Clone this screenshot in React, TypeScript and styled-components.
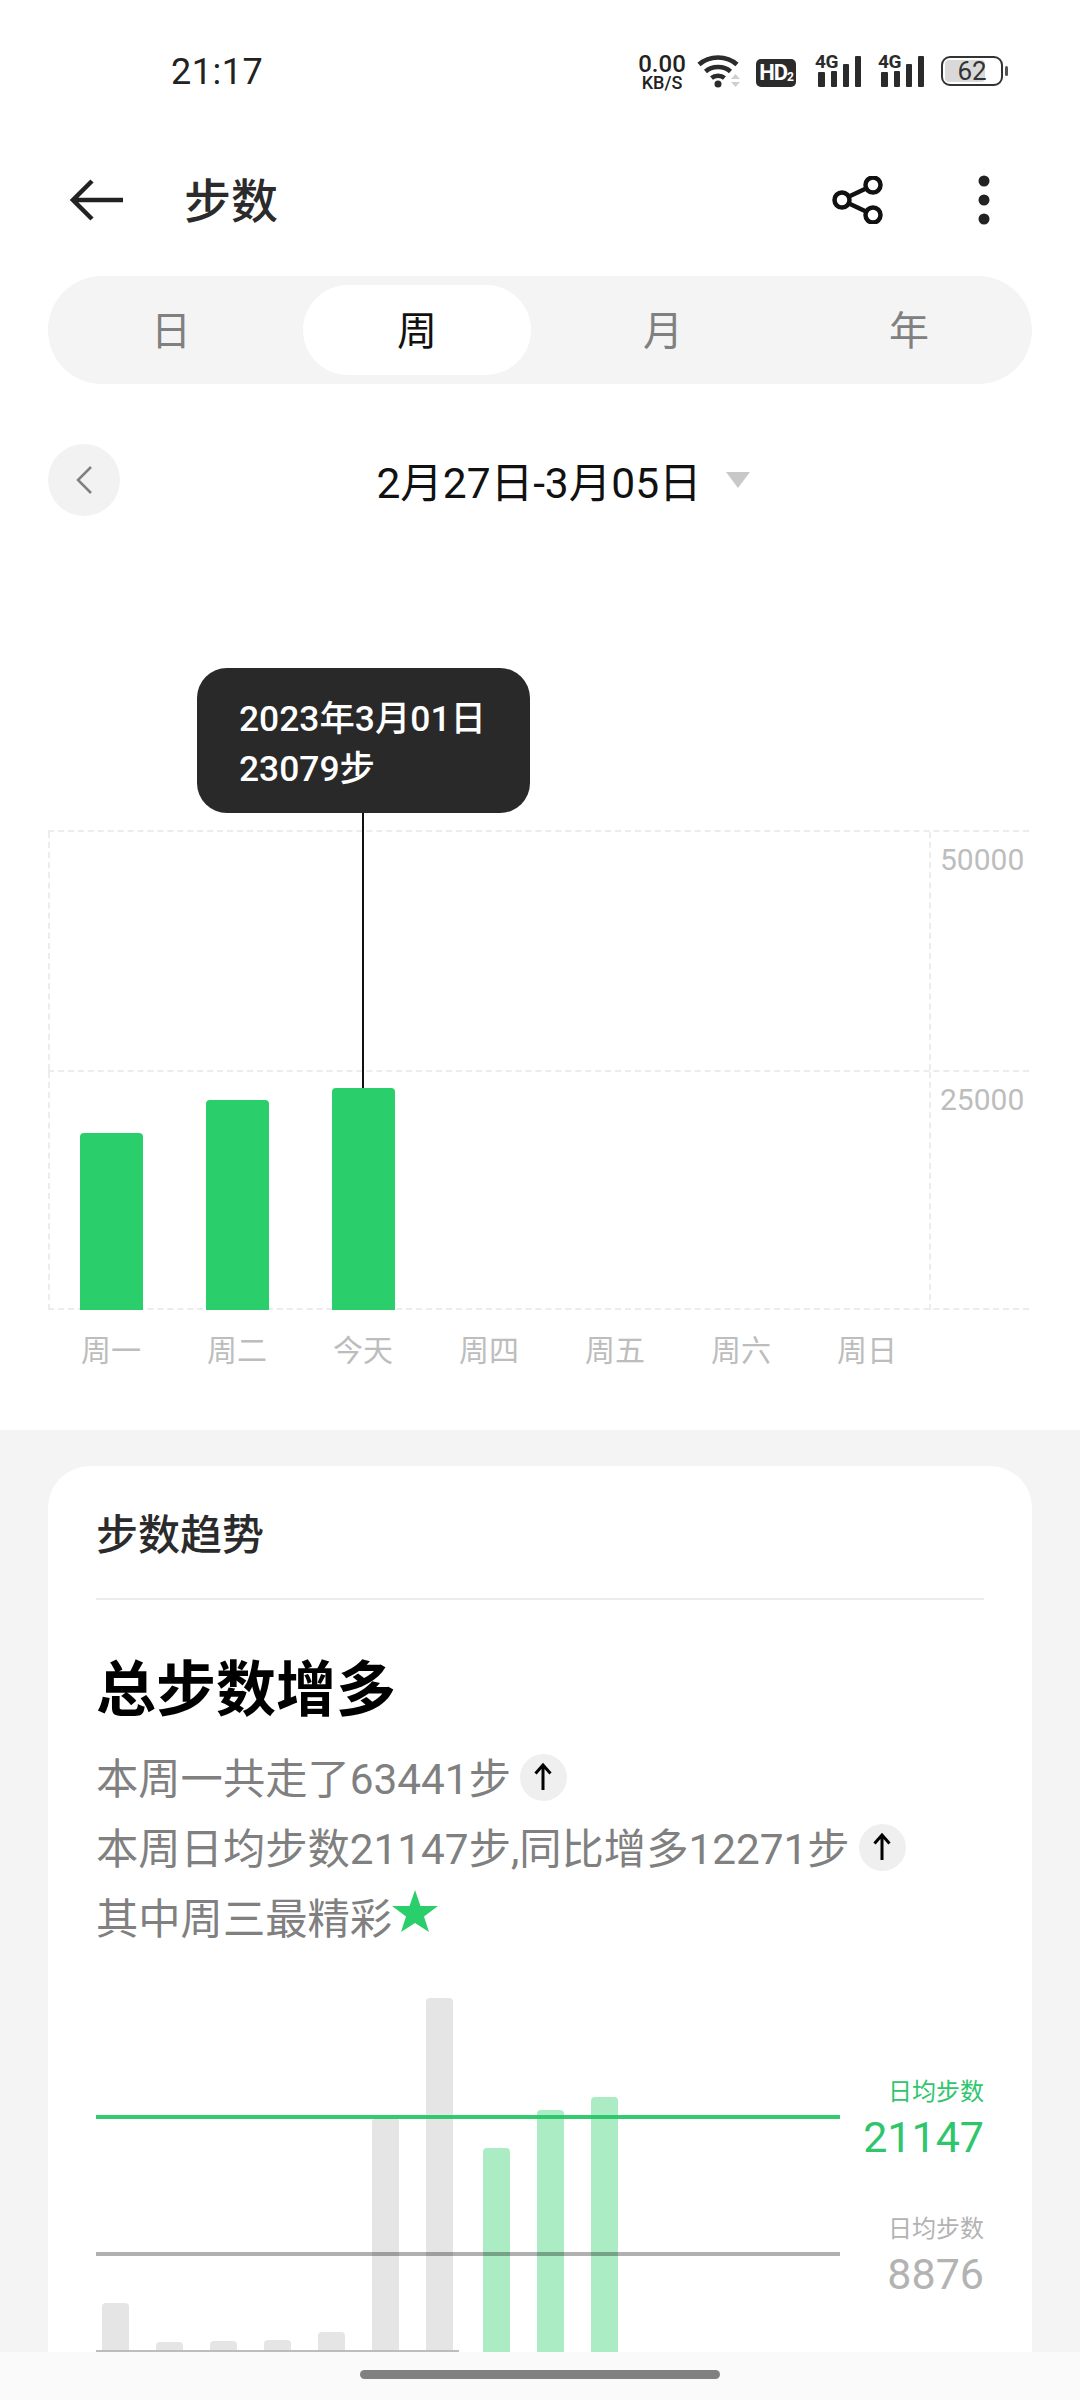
import * as React from "react";
import styled, { createGlobalStyle } from "styled-components";

const GlobalStyle = createGlobalStyle`
  html, body {
    margin: 0;
    padding: 0;
    background: #fff;
  }
  * {
    box-sizing: border-box;
  }
`;

const FONT = `Roboto, "Noto Sans CJK SC", sans-serif`;
const GREEN = "#2acf6b";

const Page = styled.div`
  position: relative;
  width: 1080px;
  height: 2400px;
  overflow: hidden;
  background: #fff;
  font-family: ${FONT};
  color: #222;
`;

/* status bar */
const StatusBar = styled.div`
  height: 142px;
  padding: 0 0 0 171px;
  display: flex;
  align-items: center;
  justify-content: space-between;
`;

const Clock = styled.span`
  font-size: 36px;
  color: #222;
  letter-spacing: 0.5px;
  margin-top: 2px;
`;

const StatusIcons = styled.div`
  display: flex;
  align-items: center;
  padding-right: 77px;
`;

const Speed = styled.div`
  width: 52px;
  margin-right: 9px;
  display: flex;
  flex-direction: column;
  align-items: center;
  color: #222;
  font-weight: 500;
`;

const SpeedValue = styled.span`
  font-size: 24px;
  line-height: 22px;
`;

const SpeedUnit = styled.span`
  font-size: 18px;
  line-height: 15px;
`;

const HdBadge = styled.span`
  width: 40px;
  height: 28px;
  margin: 4px 19px 0 15px;
  background: #2b2b2b;
  border-radius: 5px;
  color: #fff;
  font-size: 22px;
  line-height: 28px;
  font-weight: 700;
  text-align: center;
  letter-spacing: -1px;

  & sub {
    font-size: 12px;
    line-height: 0;
    vertical-align: -1px;
  }
`;

const Signal = styled.div`
  position: relative;
  width: 47px;
  height: 32px;
  margin-right: 16px;
`;

const SignalType = styled.span`
  position: absolute;
  left: 0;
  top: -3px;
  font-size: 19px;
  line-height: 20px;
  font-weight: 700;
  color: #2b2b2b;
  letter-spacing: -0.5px;
`;

const Battery = styled.div`
  position: relative;
  width: 62px;
  height: 30px;
  border: 2px solid #333;
  border-radius: 9px;
  display: flex;
  align-items: center;
  justify-content: center;

  &::after {
    content: "";
    position: absolute;
    right: -7px;
    top: 8px;
    width: 3px;
    height: 10px;
    background: #555;
    border-radius: 2px;
  }
`;

const BatteryFill = styled.span`
  position: absolute;
  left: 2px;
  top: 2px;
  bottom: 2px;
  width: 40px;
  background: #d9d9d9;
  border-radius: 4px;
`;

const BatteryText = styled.span`
  position: relative;
  font-size: 26px;
  line-height: 26px;
  color: #333;
`;

/* app bar */
const AppBar = styled.div`
  height: 116px;
  padding: 0 0 0 70px;
  display: flex;
  align-items: center;
`;

const Title = styled.h1`
  margin: 0 0 6px 60px;
  flex: 1;
  font-size: 47px;
  font-weight: 500;
  color: #2b2b2b;
`;

const BarIcon = styled.svg<{ $margin?: number }>`
  display: block;
  margin-right: ${(p) => p.$margin ?? 0}px;
`;

/* tabs */
const Tabs = styled.div`
  margin: 18px 48px 0;
  height: 108px;
  padding: 9px 0;
  border-radius: 54px;
  background: #f4f4f4;
  display: grid;
  grid-template-columns: repeat(4, 1fr);
`;

const Tab = styled.div<{ $active?: boolean }>`
  margin: 0 9px;
  padding-bottom: 5px;
  border-radius: 45px;
  display: flex;
  align-items: center;
  justify-content: center;
  font-size: 40px;
  color: ${(p) => (p.$active ? "#111" : "#808080")};
  background: ${(p) => (p.$active ? "#fff" : "transparent")};
`;

/* date row */
const DateRow = styled.div`
  position: relative;
  margin: 60px 48px 0;
  height: 72px;
  display: flex;
  align-items: center;
  justify-content: center;
`;

const PrevButton = styled.div`
  position: absolute;
  left: 0;
  top: 0;
  width: 72px;
  height: 72px;
  border-radius: 50%;
  background: #f2f2f2;
  display: flex;
  align-items: center;
  justify-content: center;
`;

const DateText = styled.span`
  font-size: 42.5px;
  color: #111;
  margin: 0 0 2px 46px;
`;

const Caret = styled.span`
  width: 0;
  height: 0;
  margin-left: 24px;
  border-left: 12px solid transparent;
  border-right: 12px solid transparent;
  border-top: 16px solid #c8c8c8;
`;

/* weekly chart */
const WeekChart = styled.div`
  position: relative;
  margin: 314px 51px 0 48px;
  height: 480px;
`;

const GridRow = styled.div`
  display: grid;
  grid-template-columns: 883px 1fr;
  height: 240px;
  border-top: 2px dashed #ececec;
`;

const GridCell = styled.div`
  border-left: 2px dashed #ececec;
  border-right: 2px dashed #ececec;
`;

const YLabel = styled.div`
  padding: 11px 0 0 9px;
  font-size: 30px;
  line-height: 34px;
  color: #bdbdbd;
`;

const BaseLine = styled.div`
  position: absolute;
  left: 0;
  right: 0;
  bottom: 0;
  border-top: 2px dashed #ececec;
`;

const WeekBars = styled.div`
  position: absolute;
  left: 32px;
  bottom: 0;
  display: flex;
  align-items: flex-end;
  gap: 63px;
`;

const WeekBar = styled.div`
  width: 63px;
  background: ${GREEN};
  border-radius: 4px 4px 0 0;
`;

const Marker = styled.div`
  position: absolute;
  left: 314px;
  top: -17px;
  height: 275px;
  width: 2px;
  background: #111;
`;

const Tooltip = styled.div`
  position: absolute;
  left: 149px;
  top: -162px;
  width: 333px;
  height: 145px;
  padding: 26px 42px;
  border-radius: 30px;
  background: #292929;
  color: #fff;
  font-size: 35.4px;
  line-height: 50px;
  font-weight: 500;
`;

const WeekLabels = styled.div`
  height: 120px;
  padding: 21px 0 0 48px;
  display: grid;
  grid-template-columns: repeat(7, 126px);
  font-size: 30px;
  line-height: 40px;
  color: #bdbdbd;
  text-align: center;
`;

/* trend card */
const Section = styled.div`
  background: #f4f4f4;
  padding: 36px 48px 0;
  height: 970px;
`;

const Card = styled.div`
  background: #fff;
  border-radius: 42px 42px 0 0;
  padding: 0 48px;
  height: 934px;
`;

const CardHeader = styled.div`
  height: 134px;
  padding-bottom: 2px;
  display: flex;
  align-items: center;
  border-bottom: 2px solid #ececec;
  font-size: 42px;
  font-weight: 500;
  color: #2b2b2b;
`;

const Heading = styled.h2`
  margin: 53px 0 11px;
  font-size: 60px;
  line-height: 76px;
  font-weight: 700;
  color: #000;
`;

const Line = styled.div`
  height: 70px;
  display: flex;
  align-items: center;
  font-size: 42.3px;
  color: #808080;
`;

const UpBadge = styled.span`
  width: 47px;
  height: 47px;
  margin: 4px 0 0 9px;
  border-radius: 50%;
  background: #efefef;
  display: flex;
  align-items: center;
  justify-content: center;
`;

const TrendChart = styled.div`
  position: relative;
  height: 402px;
  display: flex;
  align-items: flex-end;
`;

const LastWeek = styled.div`
  width: 363px;
  padding: 0 6px;
  display: flex;
  align-items: flex-end;
  gap: 27px;
  border-bottom: 2px solid #bdbdbd;
`;

const ThisWeek = styled.div`
  margin-left: 24px;
  display: flex;
  align-items: flex-end;
  gap: 27px;
`;

const TrendBar = styled.div<{ $current?: boolean }>`
  width: 27px;
  border-radius: 4px 4px 0 0;
  background: ${(p) => (p.$current ? "#abecc4" : "#e5e5e5")};
`;

const AverageLine = styled.div<{ $top: number; $color: string }>`
  position: absolute;
  left: 0;
  top: ${(p) => p.$top}px;
  width: 744px;
  height: 4px;
  background: ${(p) => p.$color};
`;

const Legend = styled.div<{ $top: number; $color: string }>`
  position: absolute;
  right: 0;
  top: ${(p) => p.$top}px;
  text-align: right;
  color: ${(p) => p.$color};
`;

const LegendLabel = styled.div`
  font-size: 24px;
  line-height: 32px;
`;

const LegendValue = styled.div`
  margin-top: 5px;
  font-size: 43px;
  line-height: 48px;
`;

/* gesture bar */
const NavBar = styled.div`
  position: absolute;
  left: 0;
  right: 0;
  bottom: 0;
  height: 48px;
  background: #fafafa;
  display: flex;
  justify-content: center;
  padding-top: 18px;
`;

const NavHandle = styled.div`
  width: 360px;
  height: 9px;
  border-radius: 5px;
  background: #808080;
`;

const SignalBars = () => (
  <svg width="47" height="32" viewBox="0 0 47 32" fill="#2b2b2b" style={{ display: "block" }}>
    <rect x="3" y="17" width="7" height="15" rx="1" />
    <rect x="16" y="16" width="6" height="16" rx="1" />
    <rect x="28" y="9" width="6" height="23" rx="1" />
    <rect x="40" y="1" width="6" height="31" rx="1" />
  </svg>
);

const UpArrow = () => (
  <svg width="20" height="28" viewBox="0 0 20 28" fill="none" stroke="#000" strokeWidth="3">
    <path d="M10 27V2M2.5 10.5 10 2l7.500 8.500" />
  </svg>
);

const weekdays = ["周一", "周二", "今天", "周四", "周五", "周六", "周日"];
const weekBars = [177, 210, 222];
const lastWeekBars = [47, 8, 9, 10, 18, 232, 352];
const thisWeekBars = [204, 242, 255];

export default function App() {
  return (
    <Page>
      <GlobalStyle />
      <StatusBar>
        <Clock>21:17</Clock>
        <StatusIcons>
          <Speed>
            <SpeedValue>0.00</SpeedValue>
            <SpeedUnit>KB/S</SpeedUnit>
          </Speed>
          <svg width="44" height="34" viewBox="0 0 44 34" fill="none" style={{ display: "block" }}>
            <path d="M2 10.500C12 1 30 1 40 10.500" stroke="#2b2b2b" strokeWidth="4.500" />
            <path d="M8.500 17.500C15 11.500 27 11.500 33.500 17.500" stroke="#2b2b2b" strokeWidth="4.500" />
            <path d="M14.500 24C18 21 24 21 27.500 24" stroke="#2b2b2b" strokeWidth="4.500" />
            <circle cx="21" cy="30" r="3.500" fill="#2b2b2b" />
            <path d="M38.500 20l4.500 5h-9zM38.500 33l4.500-5h-9z" fill="#cfcfcf" />
          </svg>
          <HdBadge>
            HD<sub>2</sub>
          </HdBadge>
          <Signal>
            <SignalBars />
            <SignalType>4G</SignalType>
          </Signal>
          <Signal>
            <SignalBars />
            <SignalType>4G</SignalType>
          </Signal>
          <Battery>
            <BatteryFill />
            <BatteryText>62</BatteryText>
          </Battery>
        </StatusIcons>
      </StatusBar>

      <AppBar>
        <svg width="54" height="42" viewBox="0 0 54 42" fill="none" stroke="#222" strokeWidth="4.500" style={{ display: "block" }}>
          <path d="M53 21H3M22 2 3 21l19 19" />
        </svg>
        <Title>步数</Title>
        <BarIcon $margin={94} width="52" height="48" viewBox="0 0 52 48" fill="none" stroke="#111" strokeWidth="4.500">
          <circle cx="10" cy="24" r="7.500" />
          <circle cx="41" cy="9" r="7.500" />
          <circle cx="41" cy="39" r="7.500" />
          <path d="M17 20.500 34 12.500M17 27.500 34 35.500" />
        </BarIcon>
        <BarIcon $margin={90} width="12" height="50" viewBox="0 0 12 50" fill="#222">
          <circle cx="6" cy="6" r="5.500" />
          <circle cx="6" cy="25" r="5.500" />
          <circle cx="6" cy="44" r="5.500" />
        </BarIcon>
      </AppBar>

      <Tabs>
        <Tab>日</Tab>
        <Tab $active>周</Tab>
        <Tab>月</Tab>
        <Tab>年</Tab>
      </Tabs>

      <DateRow>
        <PrevButton>
          <svg width="20" height="30" viewBox="0 0 20 30" fill="none" stroke="#808080" strokeWidth="2.500">
            <path d="M17 2 4 15l13 13" />
          </svg>
        </PrevButton>
        <DateText>2月27日-3月05日</DateText>
        <Caret />
      </DateRow>

      <WeekChart>
        <GridRow>
          <GridCell />
          <YLabel>50000</YLabel>
        </GridRow>
        <GridRow>
          <GridCell />
          <YLabel>25000</YLabel>
        </GridRow>
        <BaseLine />
        <WeekBars>
          {weekBars.map((h, i) => (
            <WeekBar key={i} style={{ height: h }} />
          ))}
        </WeekBars>
        <Marker />
        <Tooltip>
          2023年3月01日
          <br />
          23079步
        </Tooltip>
      </WeekChart>

      <WeekLabels>
        {weekdays.map((d) => (
          <span key={d}>{d}</span>
        ))}
      </WeekLabels>

      <Section>
        <Card>
          <CardHeader>步数趋势</CardHeader>
          <Heading>总步数增多</Heading>
          <Line>
            本周一共走了63441步
            <UpBadge>
              <UpArrow />
            </UpBadge>
          </Line>
          <Line>
            本周日均步数21147步,同比增多12271步
            <UpBadge>
              <UpArrow />
            </UpBadge>
          </Line>
          <Line>
            其中周三最精彩
            <svg width="46" height="42" viewBox="0 0 46 42" fill={GREEN} style={{ display: "block", marginTop: -8 }}>
              <path d="M23 0 28.500 16H46L32 26.500 37 42 23 33 9 42l5-15.500L0 16h17.500z" />
            </svg>
          </Line>
          <TrendChart>
            <LastWeek>
              {lastWeekBars.map((h, i) => (
                <TrendBar key={i} style={{ height: h }} />
              ))}
            </LastWeek>
            <ThisWeek>
              {thisWeekBars.map((h, i) => (
                <TrendBar key={i} $current style={{ height: h }} />
              ))}
            </ThisWeek>
            <AverageLine $top={165} $color="rgba(34, 197, 100, 0.92)" />
            <AverageLine $top={302} $color="rgba(0, 0, 0, 0.31)" />
            <Legend $top={126} $color="#2fc56d">
              <LegendLabel>日均步数</LegendLabel>
              <LegendValue>21147</LegendValue>
            </Legend>
            <Legend $top={263} $color="#b3b3b3">
              <LegendLabel>日均步数</LegendLabel>
              <LegendValue>8876</LegendValue>
            </Legend>
          </TrendChart>
        </Card>
      </Section>

      <NavBar>
        <NavHandle />
      </NavBar>
    </Page>
  );
}
